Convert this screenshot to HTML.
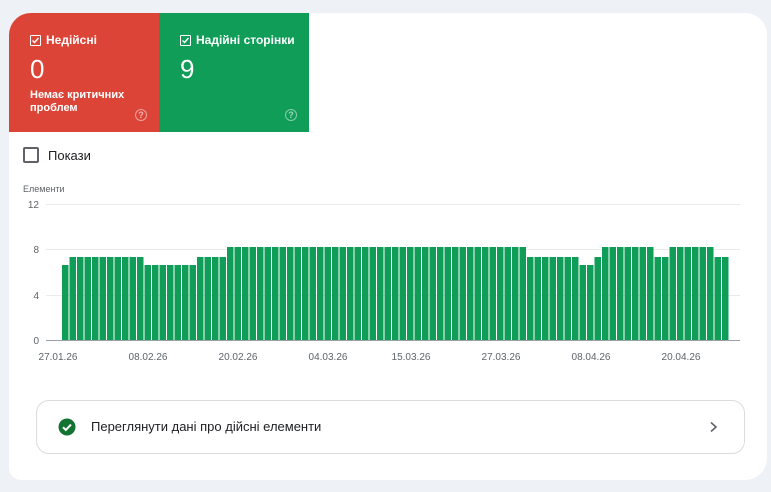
<!DOCTYPE html>
<html><head><meta charset="utf-8"><style>
body{margin:0;width:771px;height:492px;background:#eef2f7;font-family:"Liberation Sans",Arial,sans-serif;position:relative;overflow:hidden}
.card{position:absolute;left:9px;top:13px;width:758px;height:467px;background:#fff;border-radius:22px 22px 22px 12px;overflow:hidden}
.tile{position:absolute;top:0;height:119px;width:150px;color:#fff}
.red{left:0;background:#db4437}
.green{left:150px;background:#0f9d58}
.lab{position:absolute;left:21px;top:20px;font-size:12px;font-weight:bold;display:flex;align-items:center}
.cb{width:9px;height:9px;border:1.3px solid #fff;border-radius:1px;margin-right:5px;position:relative}
.num{position:absolute;left:21px;top:41px;font-size:26px}
.sub{position:absolute;left:21px;top:76px;font-size:11px;font-weight:bold;line-height:13px}
.q{position:absolute;left:126px;top:96px;width:10px;height:10px;border:1.3px solid rgba(255,255,255,.5);border-radius:50%;font-size:9px;color:rgba(255,255,255,.6);text-align:center;line-height:10px;font-weight:bold}
.btn{position:absolute;left:27px;top:387px;width:707px;height:52px;border:1px solid #dadce0;border-radius:13px}
</style></head><body>
<div class="card">
<div class="tile red"><div class="lab"><span class="cb"><svg width="9" height="9" style="position:absolute;left:0;top:0"><path d="M1.5 4.5l2 2 4-4.5" stroke="#fff" stroke-width="1.4" fill="none"/></svg></span>Недійсні</div><div class="num">0</div><div class="sub">Немає критичних<br>проблем</div><div class="q">?</div></div>
<div class="tile green"><div class="lab"><span class="cb"><svg width="9" height="9" style="position:absolute;left:0;top:0"><path d="M1.5 4.5l2 2 4-4.5" stroke="#fff" stroke-width="1.4" fill="none"/></svg></span>Надійні сторінки</div><div class="num">9</div><div class="q">?</div></div>
<div style="position:absolute;left:14px;top:134px;width:12px;height:12px;border:2px solid #5f6368;border-radius:2px"></div>
<div style="position:absolute;left:39px;top:135px;font-size:13px;color:#202124">Покази</div>
<div class="btn">
<svg style="position:absolute;left:21px;top:17px" width="18" height="18"><circle cx="9" cy="9" r="8.5" fill="#137333"/><path d="M5 9.2l2.8 2.8 5.2-5.4" stroke="#fff" stroke-width="2" fill="none"/></svg>
<div style="position:absolute;left:54px;top:18px;font-size:13px;color:#202124">Переглянути дані про дійсні елементи</div>
<svg style="position:absolute;left:672px;top:20px" width="10" height="12"><path d="M2 1.5l5 4.5-5 4.5" stroke="#5f6368" stroke-width="1.6" fill="none"/></svg>
</div>
</div>
<svg style="position:absolute;left:0;top:0" width="771" height="492">
<defs><pattern id="p" patternUnits="userSpaceOnUse" x="62" y="0" width="7.5" height="492"><rect x="0" y="0" width="6.5" height="492" fill="#0f9d58"/></pattern></defs>
<text x="23" y="192" font-size="9" fill="#5f6368" font-family="Liberation Sans">Елементи</text>
<g stroke="#e8eaed" stroke-width="1"><line x1="46" y1="204.5" x2="740" y2="204.5"/><line x1="46" y1="249.5" x2="740" y2="249.5"/><line x1="46" y1="295.5" x2="740" y2="295.5"/></g>
<g fill="#5f6368" font-size="10" font-family="Liberation Sans" text-anchor="end"><text x="39" y="208">12</text><text x="39" y="253">8</text><text x="39" y="299">4</text><text x="39" y="344">0</text></g>
<g fill="url(#p)">
<rect x="62" y="265" width="7.5" height="75"/>
<rect x="69.5" y="257" width="75" height="83"/>
<rect x="144.5" y="265" width="52.5" height="75"/>
<rect x="197" y="257" width="30" height="83"/>
<rect x="227" y="247" width="300" height="93"/>
<rect x="527" y="257" width="52.5" height="83"/>
<rect x="579.5" y="265" width="15" height="75"/>
<rect x="594.5" y="257" width="7.5" height="83"/>
<rect x="602" y="247" width="52.5" height="93"/>
<rect x="654.5" y="257" width="15" height="83"/>
<rect x="669.5" y="247" width="45" height="93"/>
<rect x="714.5" y="257" width="15" height="83"/>
</g>
<line x1="46" y1="340.5" x2="740" y2="340.5" stroke="#9aa0a6" stroke-width="1"/>
<g fill="#5f6368" font-size="10" font-family="Liberation Sans" text-anchor="middle"><text x="58" y="360">27.01.26</text><text x="148" y="360">08.02.26</text><text x="238" y="360">20.02.26</text><text x="328" y="360">04.03.26</text><text x="411" y="360">15.03.26</text><text x="501" y="360">27.03.26</text><text x="591" y="360">08.04.26</text><text x="681" y="360">20.04.26</text></g>
</svg>
</body></html>
